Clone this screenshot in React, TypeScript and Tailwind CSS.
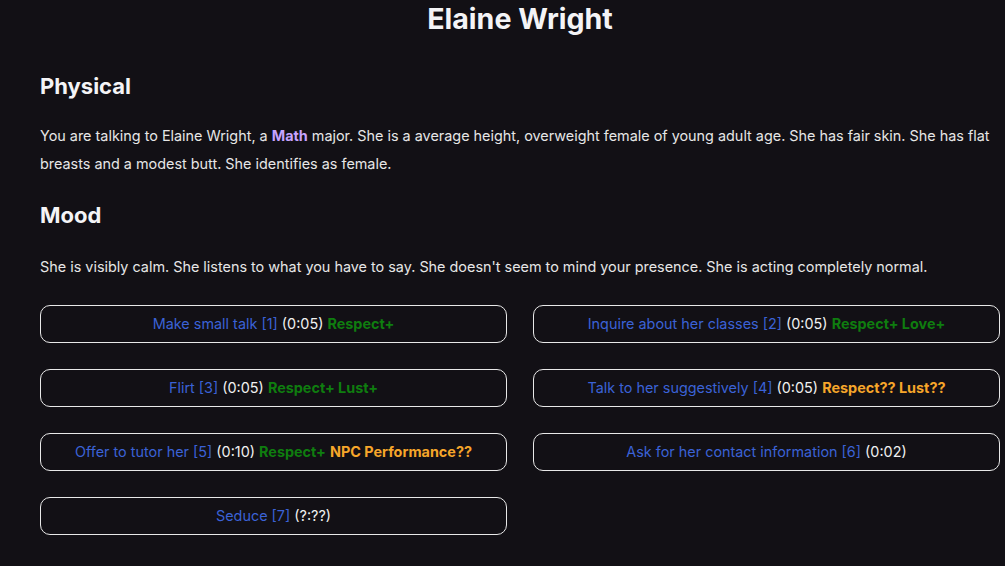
const actions: { label: string; key: number; time: string; tags: { text: string; kind: 'good' | 'unknown' }[] }[] = [
  { label: 'Make small talk', key: 1, time: '0:05', tags: [{ text: 'Respect+', kind: 'good' }] },
  { label: 'Inquire about her classes', key: 2, time: '0:05', tags: [{ text: 'Respect+ Love+', kind: 'good' }] },
  { label: 'Flirt', key: 3, time: '0:05', tags: [{ text: 'Respect+ Lust+', kind: 'good' }] },
  { label: 'Talk to her suggestively', key: 4, time: '0:05', tags: [{ text: 'Respect?? Lust??', kind: 'unknown' }] },
  {
    label: 'Offer to tutor her',
    key: 5,
    time: '0:10',
    tags: [
      { text: 'Respect+', kind: 'good' },
      { text: 'NPC Performance??', kind: 'unknown' },
    ],
  },
  { label: 'Ask for her contact information', key: 6, time: '0:02', tags: [] },
  { label: 'Seduce', key: 7, time: '?:??', tags: [] },
]

export default function App() {
  return (
    <div className="min-h-screen bg-[#121015] text-[#e6e6e6] font-['Inter','Liberation_Sans',sans-serif] overflow-hidden">
      <div className="w-[960px] ml-[40px]">
        <h1 className="text-center text-[28.6px] leading-[38px] font-bold text-[#f4f4f6]">Elaine Wright</h1>

        <h2 className="mt-[34px] text-[22px] leading-[28px] font-bold text-[#f4f4f6]">Physical</h2>
        <p className="mt-[22px] text-[14.4px] leading-[28px]">
          You are talking to Elaine Wright, a <span className="font-bold text-[#c6a3ff]">Math</span> major. She is a
          average height, overweight female of young adult age. She has fair skin. She has flat breasts and a modest
          butt. She identifies as female.
        </p>

        <h2 className="mt-[23px] text-[22px] leading-[28px] font-bold text-[#f4f4f6]">Mood</h2>
        <p className="mt-[24px] text-[14.4px] leading-[28px]">
          She is visibly calm. She listens to what you have to say. She doesn't seem to mind your presence. She is
          acting completely normal.
        </p>

        <div className="mt-[24px] grid grid-cols-2 gap-x-[26px] gap-y-[26px]">
          {actions.map((a) => (
            <button
              key={a.key}
              className="h-[38px] rounded-[10px] border border-[#e8e8e8] bg-transparent text-center text-[14.4px]"
            >
              <span className="text-[#3b62d6]">
                {a.label} [{a.key}]
              </span>{' '}
              <span className="text-[#f0f0f0]">({a.time})</span>
              {a.tags.map((t) => (
                <span key={t.text}>
                  {' '}
                  <span className={t.kind === 'good' ? 'font-bold text-[#0f7d0f]' : 'font-bold text-[#f6a62a]'}>
                    {t.text}
                  </span>
                </span>
              ))}
            </button>
          ))}
        </div>
      </div>
    </div>
  )
}
